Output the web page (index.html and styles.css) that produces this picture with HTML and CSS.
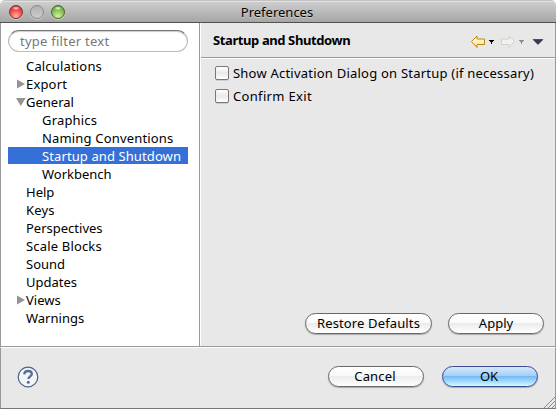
FILE: index.html
```html
<!DOCTYPE html>
<html lang="en">
<head>
<meta charset="utf-8">
<title>Preferences</title>
<link rel="stylesheet" href="styles.css">
</head>
<body>
<div class="window">
  <header class="titlebar">
    <div class="lights"><i class="light red"></i><i class="light grey"></i><i class="light green"></i></div>
    <span class="title">Preferences</span>
  </header>
  <div class="main">
    <aside class="sidebar">
      <div class="search">type filter text</div>
      <ul class="tree">
        <li class="loose">Calculations</li>
        <li class="loose"><svg class="arrow" viewBox="0 0 10 10"><path d="M1 .5 9 5 1 9.5z"/></svg>Export</li>
        <li><svg class="arrow" viewBox="0 0 10 10"><path d="M0 1h9.6L4.8 9z"/></svg>General</li>
        <li class="child loose">Graphics</li>
        <li class="child loose">Naming Conventions</li>
        <li class="child selected">Startup and Shutdown</li>
        <li class="child">Workbench</li>
        <li>Help</li>
        <li class="loose">Keys</li>
        <li>Perspectives</li>
        <li class="loose">Scale Blocks</li>
        <li>Sound</li>
        <li>Updates</li>
        <li><svg class="arrow" viewBox="0 0 10 10"><path d="M1 .5 9 5 1 9.5z"/></svg>Views</li>
        <li>Warnings</li>
      </ul>
    </aside>
    <section class="page">
      <div class="pagehead">
        <h1>Startup and Shutdown</h1>
        <svg class="nav" width="76" height="14" viewBox="0 0 76 14">
          <defs><linearGradient id="gold" x2="0" y2="1"><stop stop-color="#fffef0"/><stop offset="1" stop-color="#ffe58a"/></linearGradient></defs>
          <path d="M1.500 6.500 7 1v3h7.500v5.500H7v3z" fill="url(#gold)" stroke="#c08410"/>
          <path d="M19 5h5v1h-1v1h-1v2h-1V7h-1V6h-1z" fill="#000"/>
          <path d="M44.500 6.500 39 1v3h-7.500v5.500H39v3z" fill="#f0f0ec" stroke="#d2d2cc"/>
          <path d="M49 5h5v1h-1v1h-1v2h-1V7h-1V6h-1z" fill="#8c8c8c"/>
          <path d="M63 4.500h10L68 9.500z" fill="#33375c" stroke="#11131f" stroke-width=".5"/>
        </svg>
      </div>
      <div class="pagebody">
        <label class="option"><i class="check"></i>Show Activation Dialog on Startup (if necessary)</label>
        <label class="option"><i class="check"></i><span class="looser">Confirm Exit</span></label>
        <div class="actions">
          <button class="wide">Restore Defaults</button>
          <button>Apply</button>
        </div>
      </div>
    </section>
  </div>
  <footer class="footer">
    <svg class="help" width="22" height="22" viewBox="0 0 22 22">
      <circle cx="11" cy="11" r="9.800" fill="#f4f5f7" stroke="#48608a" stroke-width="1.200"/>
      <path d="M7.200 8.300C7.400 6 9 5 11.100 5c2.200 0 3.700 1.100 3.700 2.900 0 2.700-3.400 2.500-3.400 5.100" fill="none" stroke="#566f98" stroke-width="2.300"/>
      <circle cx="11.300" cy="16.300" r="1.500" fill="#566f98"/>
    </svg>
    <div class="buttons">
      <button class="cancel">Cancel</button>
      <button class="primary">OK</button>
    </div>
    <svg class="grip" width="11" height="11" viewBox="0 0 11 11"><path d="M0 11 11 0M4 11l7-7M8 11l3-3" stroke="#8a8a8a" fill="none"/></svg>
  </footer>
</div>
</body>
</html>
```

FILE: styles.css
```css
* { box-sizing: border-box; }
body {
  margin: 0;
  background: #fff;
  font: 13px/18px "Noto Sans", "Open Sans", sans-serif;
  color: #000;
}
.window {
  width: 556px;
  height: 409px;
  display: flex;
  flex-direction: column;
  overflow: hidden;
  background: #e8e8e8;
  border-radius: 5px 5px 0 0;
}
.titlebar {
  height: 23px;
  flex: none;
  display: grid;
  grid-template-columns: 80px 1fr 82px;
  align-items: center;
  background: linear-gradient(#cfcfcf, #a6a6a6);
  border-top: 1px solid #c3c3c3;
  border-bottom: 1px solid #515151;
  box-shadow: inset 0 1px #e2e2e2;
  border-radius: 5px 5px 0 0;
}
.title { text-align: center; text-shadow: 0 1px rgba(255,255,255,.4); }
.lights { display: flex; gap: 7px; padding: 1px 0 0 9px; }
.light {
  width: 14px;
  height: 14px;
  border-radius: 50%;
  border: 1px solid;
  box-shadow: 0 1px rgba(255,255,255,.4);
}
.red { border-color: #7d3431; background: radial-gradient(ellipse 4px 2px at 50% 18%, #ffe0dc, transparent), radial-gradient(circle at 50% 85%, #ffb0a8, #ee4a45 55%, #b32a29); }
.grey { border-color: #8a8a8a; background: linear-gradient(#b0b0b0, #cdcdcd); }
.green { border-color: #456b30; background: radial-gradient(ellipse 4px 2px at 50% 18%, #eeffe0, transparent), radial-gradient(circle at 50% 85%, #d5f49c, #83bd55 55%, #4d8633); }

.main {
  flex: none;
  height: 324px;
  display: flex;
  border: 1px solid #999;
  border-top: 0;
}
.sidebar {
  width: 199px;
  flex: none;
  padding: 7px 11px 0 7px;
  background: #fff;
  border-right: 1px solid #999;
}
.search {
  height: 22px;
  padding-left: 11px;
  border: 1px solid #bcbcbc;
  border-top-color: #777;
  border-radius: 11px;
  box-shadow: inset 0 1px 1px #ccc;
  color: #777;
  line-height: 21px;
  letter-spacing: .25px;
}
.tree { list-style: none; margin: 5px 0 0; padding: 0; }
.tree li {
  height: 17px;
  margin-bottom: 1px;
  display: flex;
  align-items: center;
  padding-left: 18px;
  white-space: nowrap;
}
.tree .loose { letter-spacing: .17px; }
.tree .child { padding-left: 34px; }
.tree .selected { background: #3470d8; color: #fff; letter-spacing: .1px; }
.arrow { width: 10px; height: 10px; margin-left: -10px; flex: none; fill: #949494; }

.page { flex: 1; display: flex; flex-direction: column; border-left: 1px solid #fff; }
.pagehead {
  height: 35px;
  display: flex;
  justify-content: space-between;
  align-items: center;
  padding: 0 9px 0 12px;
  border-bottom: 1px solid #999;
}
h1 { margin: 0; font-size: 13px; font-weight: 700; letter-spacing: -.4px; }
.nav { margin-top: 3px; }
.pagebody {
  flex: 1;
  display: flex;
  flex-direction: column;
  padding: 1px 11px 12px 14px;
  border-top: 1px solid #fff;
}
.option {
  display: flex;
  align-items: center;
  height: 23px;
  gap: 4px;
  padding-top: 2px;
  white-space: nowrap;
  letter-spacing: .22px;
}
.looser { letter-spacing: .33px; }
.check {
  width: 14px;
  height: 14px;
  border: 1px solid #777;
  border-radius: 2px;
  background: linear-gradient(#fff, #e9e9e9 50%, #fff);
  box-shadow: 0 1px #ccc;
}
.actions { display: flex; justify-content: flex-end; gap: 16px; margin-top: auto; }
button {
  width: 96px;
  height: 21px;
  padding: 0;
  border: 1px solid #686868;
  border-radius: 11px;
  background: linear-gradient(#fff, #fafafa 45%, #ececec 50%, #fff);
  box-shadow: 0 1px 1px #aaa;
  font: inherit;
  line-height: 19px;
  color: #000;
  white-space: nowrap;
}
.wide { width: 127px; letter-spacing: .13px; }
.cancel { padding-right: 2px; letter-spacing: .15px; }
.primary {
  padding-right: 2px;
  border-color: #3c4b92;
  background: linear-gradient(#d5e8fb, #a5cff7 45%, #78b9f3 50%, #a8e0ff 80%, #d2ffff);
}
.footer {
  position: relative;
  height: 62px;
  flex: none;
  display: flex;
  justify-content: space-between;
  padding: 18px 17px 0 16px;
  border: 1px solid #999;
  border-top-color: #fff;
  border-bottom-color: #777;
}
.main { border-bottom: 1px solid #999; }
.buttons { display: flex; gap: 18px; }
.grip { position: absolute; right: 0; bottom: 0; }
```
